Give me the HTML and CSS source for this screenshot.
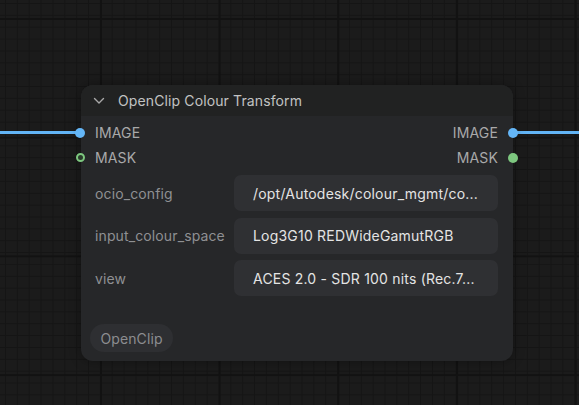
FILE: index.html
```html
<!DOCTYPE html>
<html>
<head>
<meta charset="utf-8">
<link rel="stylesheet" href="styles.css">
</head>
<body>
<div class="canvas">
  <div class="wire wire-in"></div>
  <div class="wire wire-out"></div>
  <div class="node">
    <div class="title">
      <svg class="chev" width="12" height="8" viewBox="0 0 12 8"><path d="M1.5 1.5 L6 6 L10.5 1.5" fill="none" stroke="#a8a8a8" stroke-width="1.4" stroke-linecap="round" stroke-linejoin="round"/></svg>
      <span class="title-text">OpenClip Colour Transform</span>
    </div>
    <div class="body">
      <div class="slot">
        <span class="dot dot-in blue"></span>
        <span class="slot-label">IMAGE</span>
        <span class="slot-label">IMAGE</span>
        <span class="dot dot-out blue"></span>
      </div>
      <div class="slot">
        <span class="dot dot-in ring"></span>
        <span class="slot-label">MASK</span>
        <span class="slot-label">MASK</span>
        <span class="dot dot-out green"></span>
      </div>
      <div class="widgets">
        <div class="widget"><span class="wlabel">ocio_config</span><span class="wbox">/opt/Autodesk/colour_mgmt/co...</span></div>
        <div class="widget"><span class="wlabel">input_colour_space</span><span class="wbox">Log3G10 REDWideGamutRGB</span></div>
        <div class="widget"><span class="wlabel">view</span><span class="wbox">ACES 2.0 - SDR 100 nits (Rec.7...</span></div>
      </div>
      <div class="footer"><span class="badge">OpenClip</span></div>
    </div>
  </div>
</div>
</body>
</html>
```
FILE: styles.css
```css
* { box-sizing: border-box; }
html, body { margin: 0; padding: 0; }
body {
  width: 579px;
  height: 405px;
  overflow: hidden;
  font-family: Inter, "Noto Sans", sans-serif;
}
.canvas {
  position: relative;
  width: 579px;
  height: 405px;
  background-color: #1b1b1b;
  background-image:
    linear-gradient(90deg, #121212 2px, transparent 2px),
    linear-gradient(0deg, #121212 2px, transparent 2px),
    linear-gradient(90deg, #151515 1px, transparent 1px),
    linear-gradient(0deg, #151515 1px, transparent 1px);
  background-size: 118.7px 118.7px, 118.7px 118.7px, 11.87px 11.87px, 11.87px 11.87px;
  background-position: 100px 0, 0 20px, 5px 0, 0 4px;
}
.wire {
  position: absolute;
  height: 3px;
  background: #62b4f5;
  top: 131px;
}
.wire-in { left: 0; width: 80px; }
.wire-out { left: 513px; width: 66px; }
.node {
  position: absolute;
  left: 81px;
  top: 85px;
  width: 432px;
  height: 276px;
  border-radius: 12px;
  background: #262729;
  box-shadow: 0 0 12px rgba(0,0,0,0.35);
  display: flex;
  flex-direction: column;
}
.title {
  height: 31px;
  background: #212222;
  border-radius: 12px 12px 0 0;
  display: flex;
  align-items: center;
  padding-left: 12px;
  gap: 13px;
}
.chev { display: block; margin-top: 1px; }
.title-text {
  color: #c2c2c2;
  font-size: 14px;
  letter-spacing: 0.12px;
}
.body {
  flex: 1;
  display: flex;
  flex-direction: column;
  padding: 4px 15px 9px 14px;
}
.slot {
  position: relative;
  height: 25px;
  display: flex;
  align-items: center;
  justify-content: space-between;
}
.slot-label {
  color: #a9a9a9;
  font-size: 14px;
  letter-spacing: 0.15px;
}
.dot {
  position: absolute;
  top: 50%;
  width: 10px;
  height: 10px;
  margin-top: -5px;
  border-radius: 50%;
}
.dot-in { left: -20px; }
.dot-out { right: -20px; }
.blue { background: #64b6f7; }
.green { background: #7dc77f; }
.ring { background: #2a3a2b; border: 2.5px solid #7dc77f; width: 9px; height: 9px; margin-top: -4.5px; left: -19.5px; }
.widgets {
  margin-top: 5px;
  display: flex;
  flex-direction: column;
  gap: 6.5px;
}
.widget {
  display: flex;
  align-items: center;
  height: 36px;
}
.wlabel {
  width: 139px;
  color: #8f9093;
  font-size: 14px;
  letter-spacing: 0.12px;
}
.wbox {
  flex: 1;
  height: 36px;
  border-radius: 7px;
  background: #2f3033;
  color: #e4e4e4;
  font-size: 14px;
  letter-spacing: 0.2px;
  display: flex;
  align-items: center;
  padding-left: 19px;
  white-space: nowrap;
  overflow: hidden;
}
.footer {
  margin-top: auto;
  display: flex;
}
.badge {
  margin-left: -5px;
  height: 28px;
  padding: 0 10.5px;
  border-radius: 14px;
  background: #2e2f32;
  color: #8c8d90;
  font-size: 14px;
  letter-spacing: 0.1px;
  display: flex;
  align-items: center;
}
```
